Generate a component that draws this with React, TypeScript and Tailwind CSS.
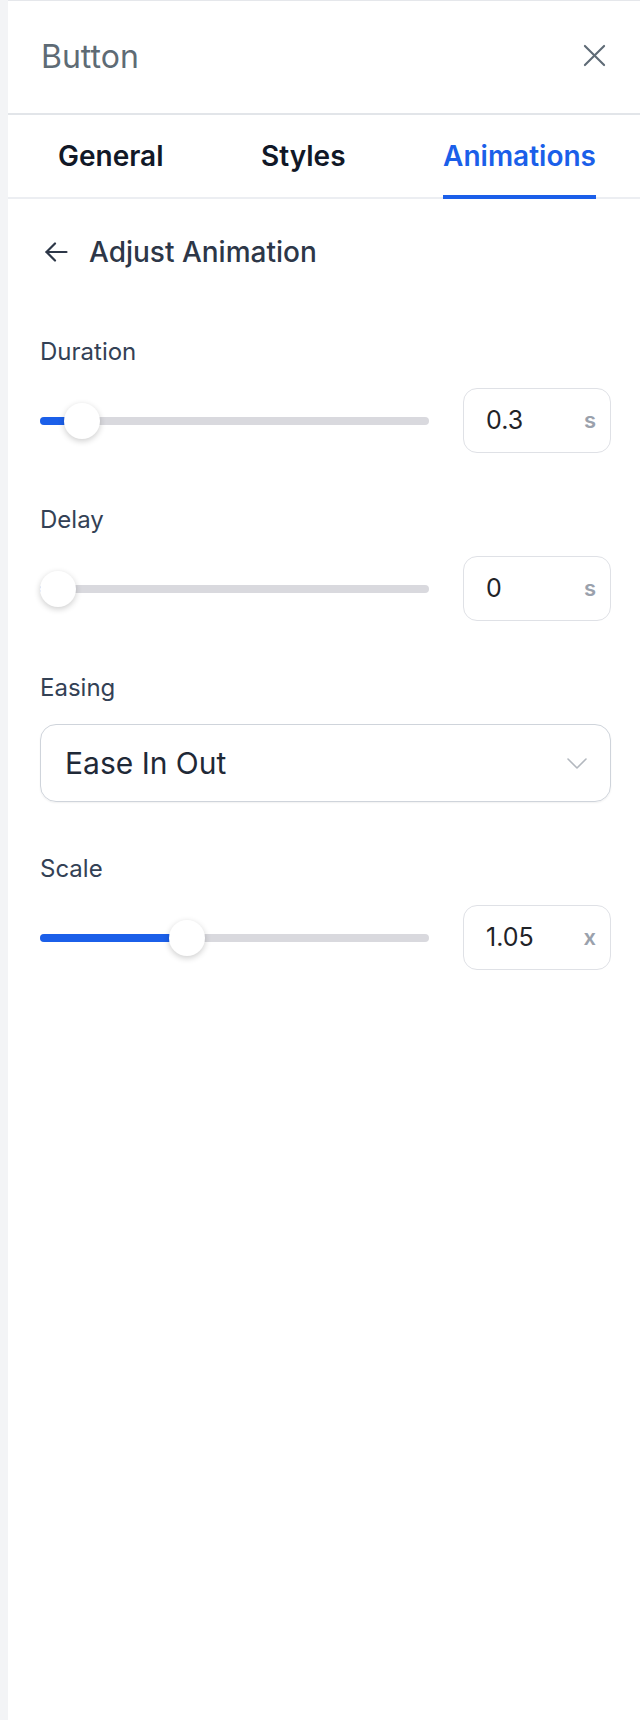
import React from 'react';

const FONT = { fontFamily: 'Inter, "Noto Sans", sans-serif' };

type SliderField = {
  label: string;
  value: string;
  unit: string;
  ratio: number;
};

const fields: SliderField[] = [
  { label: 'Duration', value: '0.3', unit: 's', ratio: (0.3 - 0.1) / (3 - 0.1) },
  { label: 'Delay', value: '0', unit: 's', ratio: 0 },
];

const scaleField: SliderField = { label: 'Scale', value: '1.05', unit: 'x', ratio: (1.05 - 0.5) / (2 - 0.5) };

function Slider({ ratio }: { ratio: number }) {
  const pos = `calc(18px + ${ratio} * (100% - 36px))`;
  return (
    <div className="relative flex-1 h-[36px] flex items-center">
      <div className="relative w-full h-[8px] rounded-full bg-[#d9d9de]">
        <div className="absolute left-0 top-0 h-full rounded-full bg-[#1b5fe9]" style={{ width: pos }} />
      </div>
      <div
        className="absolute top-0 w-[36px] h-[36px] -translate-x-1/2 rounded-full bg-white shadow-[0_2px_6px_rgba(0,0,0,0.2)]"
        style={{ left: pos }}
      />
    </div>
  );
}

function SliderRow({ field, first }: { field: SliderField; first?: boolean }) {
  return (
    <div className={first ? '' : 'mt-[53px]'}>
      <div className="text-[24px] leading-[28px] text-[#334155]">{field.label}</div>
      <div className="mt-[22px] flex items-center gap-[34px]">
        <Slider ratio={field.ratio} />
        <div className="w-[148px] h-[65px] rounded-[14px] border-[1.5px] border-[#dfe1e6] flex items-center justify-between pl-[22px] pr-[14px]">
          <span className="text-[25px] text-[#1f2328]">{field.value}</span>
          <span className="text-[22px] font-semibold text-[#9aa1ac]">{field.unit}</span>
        </div>
      </div>
    </div>
  );
}

export default function App() {
  return (
    <div className="flex min-h-[1720px] w-[640px] bg-white" style={FONT}>
      <div className="w-[8px] shrink-0 bg-[#f3f4f6]" />
      <div className="flex-1 flex flex-col border-t border-[#e5e7eb]">
        {/* header */}
        <div className="h-[114px] flex items-center justify-between pl-[33px] pr-[34px] border-b-2 border-[#e2e5e9]">
          <span className="text-[32px] text-[#5e6b75]">Button</span>
          <button className="text-[#5f6b76] -mt-[4px]">
            <svg width="23" height="23" viewBox="0 0 24 24" fill="none" stroke="currentColor" strokeWidth="2.2" strokeLinecap="round">
              <path d="M2 2 22 22" />
              <path d="M22 2 2 22" />
            </svg>
          </button>
        </div>

        {/* tabs */}
        <div className="flex justify-between pl-[50px] pr-[44px] border-b-2 border-[#eceef2]">
          {['General', 'Styles', 'Animations'].map((t) => (
            <div key={t} className="relative h-[82px] flex items-center">
              <span className={`text-[28px] font-semibold ${t === 'Animations' ? 'text-[#1b5fe9]' : 'text-[#111827]'}`}>
                {t}
              </span>
              {t === 'Animations' && (
                <div className="absolute left-0 right-0 bottom-[-2px] h-[4px] bg-[#1b5fe9]" />
              )}
            </div>
          ))}
        </div>

        <div className="pl-[32px] pr-[29px]">
          {/* back row */}
          <div className="mt-[37px] h-[32px] flex items-center gap-[21px] text-[#2d3748]">
            <svg className="ml-[5px]" width="23" height="20" viewBox="0 0 23 20" fill="none" stroke="currentColor" strokeWidth="2.2" strokeLinecap="round" strokeLinejoin="round">
              <path d="M21.5 10H1.5" />
              <path d="M10 1.5 1.5 10 10 18.5" />
            </svg>
            <span className="text-[28px] font-medium">Adjust Animation</span>
          </div>

          <div className="mt-[70px]">
            <SliderRow field={fields[0]} first />
            <SliderRow field={fields[1]} />

            <div className="mt-[53px]">
              <div className="text-[24px] leading-[28px] text-[#334155]">Easing</div>
              <div className="mt-[22px] h-[78px] rounded-[16px] border-[1.5px] border-[#cfd4db] shadow-[0_1px_2px_rgba(0,0,0,0.06)] flex items-center justify-between pl-[24px] pr-[23px]">
                <span className="text-[30px] text-[#1f2937]">Ease In Out</span>
                <svg width="20" height="11" viewBox="0 0 20 11" fill="none" stroke="#b3b8bf" strokeWidth="1.6" strokeLinecap="round" strokeLinejoin="round">
                  <path d="M1 1l9 9 9-9" />
                </svg>
              </div>
            </div>

            <div className="mt-[53px]">
              <SliderRow field={scaleField} first />
            </div>
          </div>
        </div>
      </div>
    </div>
  );
}
